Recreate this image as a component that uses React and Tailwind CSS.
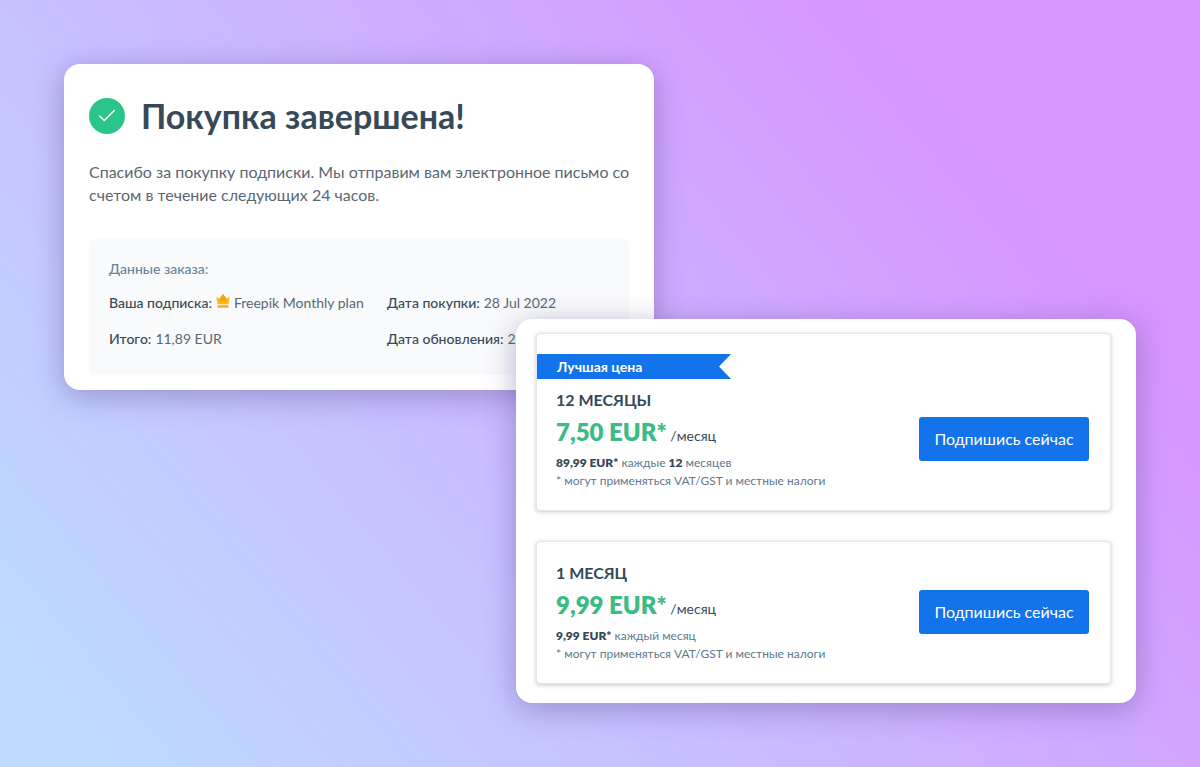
import { Check } from 'lucide-react'

const orderRows = [
  { label: 'Ваша подписка:', value: 'Freepik Monthly plan', crown: true },
  { label: 'Дата покупки:', value: '28 Jul 2022' },
  { label: 'Итого:', value: '11,89 EUR' },
  { label: 'Дата обновления:', value: '28 Aug 2022' },
]

const plans = [
  {
    title: '12 МЕСЯЦЫ',
    price: '7,50 EUR',
    badge: 'Лучшая цена',
    billing: (
      <>
        <Strong>89,99 EUR*</Strong> каждые <Strong>12</Strong> месяцев
      </>
    ),
  },
  {
    title: '1 МЕСЯЦ',
    price: '9,99 EUR',
    billing: (
      <>
        <Strong>9,99 EUR*</Strong> каждый месяц
      </>
    ),
  },
]

function Strong({ children }) {
  return <strong className="font-extrabold text-[#374957]">{children}</strong>
}

function Crown() {
  return (
    <svg viewBox="0 0 14 14" className="mr-1 inline-block h-3.5 w-3.5 align-[0px]" aria-hidden="true">
      <path d="M0.2 2.8 3.2 5 7 0.2 10.800 5 13.8 2.8 12.500 10.300H1.5z" fill="#fdbb12" />
      <path d="M7 0.200 10.800 5 9 8.500 7 6.800 5 8.500 3.200 5z" fill="#fba10c" />
      <path d="M1.500 11.400h11v2.200h-11z" fill="#f9a212" />
    </svg>
  )
}

function OrderCard() {
  return (
    <section className="w-full max-w-[590px] rounded-2xl bg-white px-[25px] pt-8 pb-[15px] shadow-[0_6px_30px_rgba(80,65,130,0.4)]">
      <header className="flex items-center gap-4">
        <span className="grid h-9 w-9 shrink-0 place-items-center rounded-full bg-[#2bc48a] text-white">
          <Check size={22} strokeWidth={1.6} />
        </span>
        <h1 className="text-[34px] leading-10 font-bold text-[#374957]">Покупка завершена!</h1>
      </header>
      <p className="mt-6 -mr-2 text-base leading-[23px] text-[#5a6772]">
        Спасибо за покупку подписки. Мы отправим вам электронное письмо со счетом в течение следующих 24 часов.
      </p>
      <div className="mt-[33px] rounded-md bg-[#f9fafc] px-5 pt-5 pb-6">
        <h2 className="text-sm leading-5 font-medium text-[#6b8299]">Данные заказа:</h2>
        <dl className="mt-3 grid grid-cols-[278px_1fr] gap-y-3 text-sm leading-6 text-[#5a6772]">
          {orderRows.map((row) => (
            <div key={row.label} className="flex items-baseline gap-1 whitespace-nowrap">
              <dt className="font-medium text-[#374957]">{row.label}</dt>
              <dd>
                {row.crown ? <Crown /> : null}
                {row.value}
              </dd>
            </div>
          ))}
        </dl>
      </div>
    </section>
  )
}

function PlanCard({ plan }) {
  return (
    <article className="rounded-sm border border-[#e3e8ec] bg-white pt-[19px] pb-5 shadow-[0_1px_4px_rgba(55,73,87,0.3)]">
      {plan.badge ? (
        <p className="mt-px mb-[9px] w-[194px] bg-[#1273eb] pl-5 text-sm leading-[25px] font-bold text-white [clip-path:polygon(0_0,100%_0,calc(100%-12px)_50%,100%_100%,0_100%)]">
          {plan.badge}
        </p>
      ) : null}
      <div className="flex items-center justify-between pr-[21px] pl-[19px]">
        <div className="text-[#374957]">
          <h2 className="text-base leading-6 font-bold">{plan.title}</h2>
          <p className="mt-1 text-sm leading-8">
            <span className="text-2xl leading-8 font-extrabold text-[#3dbb85]">{plan.price}*</span> /месяц
          </p>
          <p className="mt-0.5 text-xs leading-[18px] text-[#61788a]">{plan.billing}</p>
          <p className="text-xs leading-[18px] text-[#61788a]">* могут применяться VAT/GST и местные налоги</p>
        </div>
        <button
          type="button"
          className="h-11 w-[170px] shrink-0 rounded-[3px] bg-[#1273eb] text-base whitespace-nowrap text-white hover:bg-[#0f66d3]"
        >
          Подпишись сейчас
        </button>
      </div>
    </article>
  )
}

function App() {
  return (
    <main className="flex min-h-screen flex-col bg-[linear-gradient(50deg,#bddaff_6%,#cab9ff_44%,#d795ff_82%)] p-16 font-['Lato','Open_Sans',sans-serif]">
      <OrderCard />
      <section className="relative -mt-[71px] flex w-full max-w-[620px] flex-col gap-[30px] self-end rounded-2xl bg-white pt-3.5 pr-[25px] pb-[19px] pl-5 shadow-[0_6px_30px_rgba(80,65,130,0.4)]">
        {plans.map((plan) => (
          <PlanCard key={plan.title} plan={plan} />
        ))}
      </section>
    </main>
  )
}

export default App
